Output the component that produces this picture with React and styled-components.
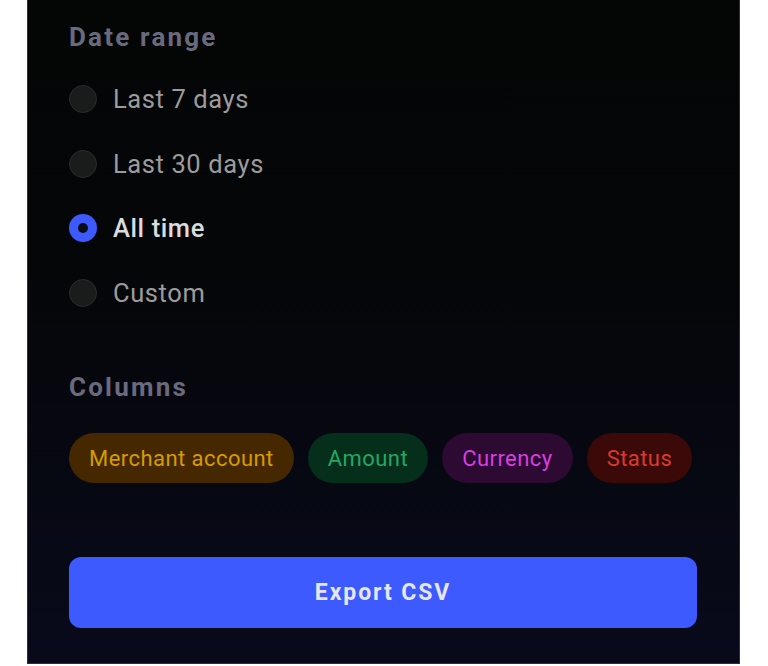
import React from "react";
import styled, { createGlobalStyle } from "styled-components";

const GlobalStyle = createGlobalStyle`
    html, body {
        margin: 0;
        padding: 0;
        background: #ffffff;
    }
    body {
        font-family: Roboto, "Noto Sans", "Liberation Sans", sans-serif;
    }
`

const Sheet = styled.div`
    margin-left: 27px;
    width: 713px;
    height: 664px;
    box-sizing: border-box;
    border: 1px solid #2e2e33;
    border-top: none;
    background: linear-gradient(180deg, #040505 0%, #050608 40%, #080a1b 100%);
    padding: 21px 42px 0 41px;
    display: flex;
    flex-direction: column;
`
const SectionTitle = styled.h3`
    margin: 0;
    font-size: 26px;
    line-height: 32px;
    font-weight: 700;
    color: #6a6a7f;
    letter-spacing: 2.2px;
    margin-top: ${p => p.$top || 0}px;
`
const RadioList = styled.div`
    display: flex;
    flex-direction: column;
    margin-top: 14px;
`
const RadioRow = styled.label`
    height: 64.5px;
    display: flex;
    align-items: center;
    column-gap: 16px;
    cursor: pointer;
`
const RadioDot = styled.span`
    width: 28px;
    height: 28px;
    border-radius: 50%;
    box-sizing: border-box;
    background: ${p => p.$checked ? "#3d5afe" : "#1a1b1b"};
    border: ${p => p.$checked ? "none" : "1.5px solid #2a2b2b"};
    display: grid;
    place-items: center;
    &::after {
        content: "";
        display: ${p => p.$checked ? "block" : "none"};
        width: 10px;
        height: 10px;
        border-radius: 50%;
        background: #0b0c14;
    }
`
const RadioLabel = styled.span`
    font-size: 25.5px;
    letter-spacing: 0.6px;
    color: ${p => p.$checked ? "#dcdcdc" : "#9c9c9c"};
    font-weight: ${p => p.$checked ? 500 : 400};
`
const ChipRow = styled.div`
    display: flex;
    column-gap: 14px;
    margin-top: 30px;
`
const Chip = styled.span`
    flex-shrink: 0;
    white-space: nowrap;
    height: 50px;
    padding: 0 20px;
    border-radius: 25px;
    display: flex;
    align-items: center;
    font-size: 22px;
    letter-spacing: 0.45px;
    background: ${p => p.$bg};
    color: ${p => p.$fg};
`
const ExportButton = styled.button`
    margin-top: 74px;
    height: 71px;
    width: 628px;
    border: none;
    border-radius: 12px;
    background: #3d5afe;
    color: #e6e6ee;
    font-family: Roboto, "Noto Sans", sans-serif;
    font-size: 23px;
    font-weight: 700;
    letter-spacing: 1.9px;
    cursor: pointer;
`

const options = [
    { label: "Last 7 days" },
    { label: "Last 30 days" },
    { label: "All time", checked: true },
    { label: "Custom" },
]

const columns = [
    { label: "Merchant account", bg: "#462800", fg: "#d39c00" },
    { label: "Amount", bg: "#062f1b", fg: "#22a866" },
    { label: "Currency", bg: "#2d0a31", fg: "#d83ee2" },
    { label: "Status", bg: "#3b0a08", fg: "#d83a2f" },
]

export default function App(){
    return(
        <>
            <GlobalStyle/>
            <Sheet>
                <SectionTitle>Date range</SectionTitle>
                <RadioList>
                    {options.map(o => (
                        <RadioRow key={o.label}>
                            <RadioDot $checked={o.checked}/>
                            <RadioLabel $checked={o.checked}>{o.label}</RadioLabel>
                        </RadioRow>
                    ))}
                </RadioList>
                <SectionTitle $top={46}>Columns</SectionTitle>
                <ChipRow>
                    {columns.map(c => (
                        <Chip key={c.label} $bg={c.bg} $fg={c.fg}>{c.label}</Chip>
                    ))}
                </ChipRow>
                <ExportButton>Export CSV</ExportButton>
            </Sheet>
        </>
    )
}
